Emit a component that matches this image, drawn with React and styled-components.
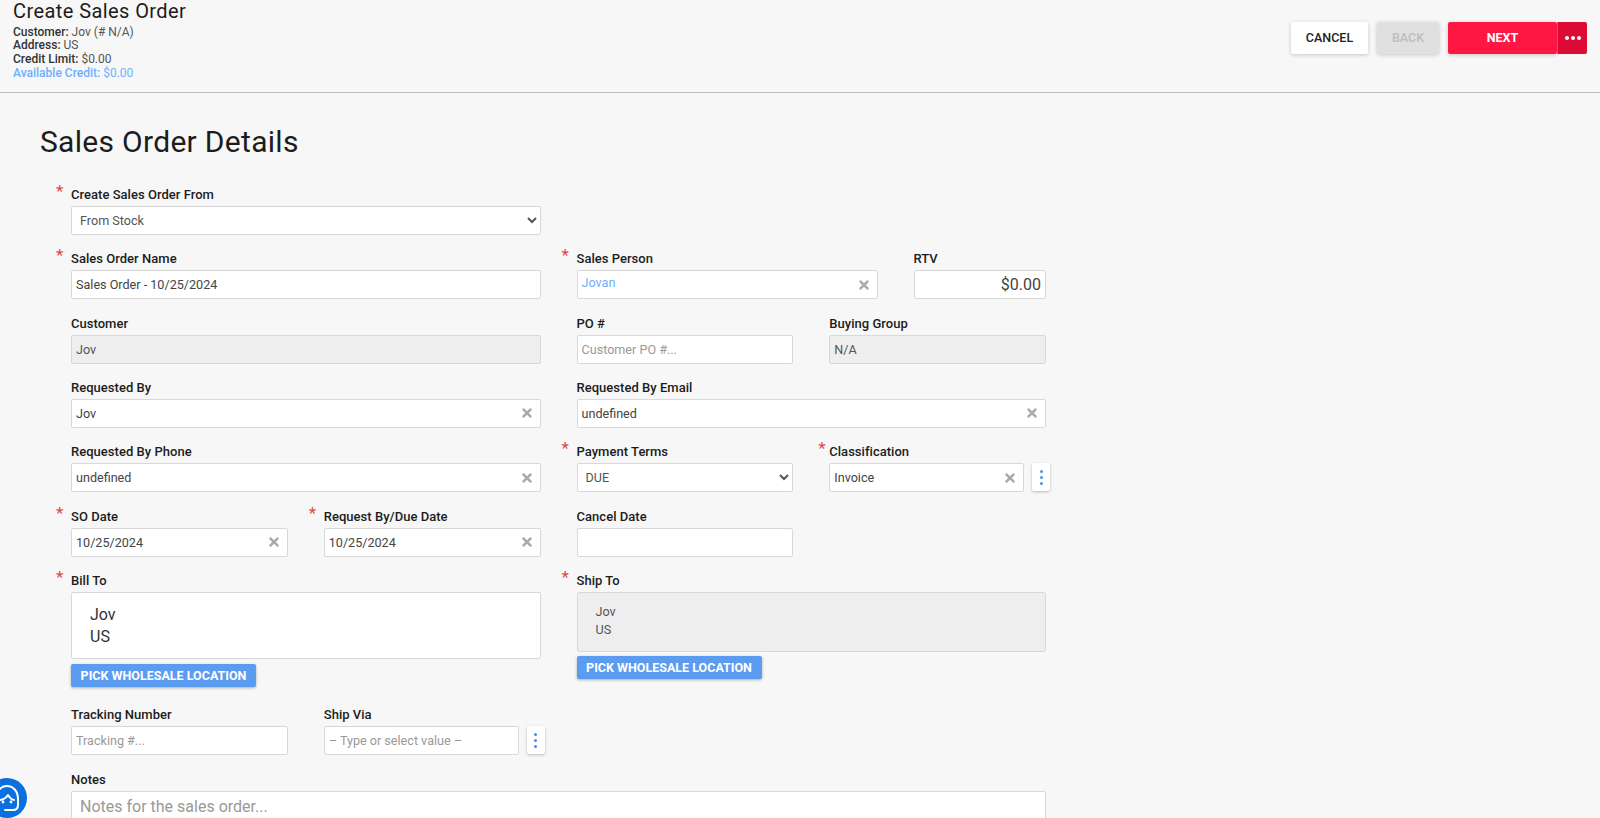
import React from "react";
import styled, { createGlobalStyle } from "styled-components";
import { FaTimes } from "react-icons/fa";

const Global = createGlobalStyle`
  html, body { margin: 0; padding: 0; height: 100%; overflow: hidden; background: #f7f7f7; }
  body { font-family: Roboto, "Liberation Sans", sans-serif; color: #212121; }
  * { box-sizing: border-box; }
`;

const Page = styled.div`
  position: relative;
  height: 100vh;
  overflow: hidden;
`;

const Header = styled.header`
  height: 93px;
  border-bottom: 1px solid #bdbdbd;
  padding: 0 13px;
  display: flex;
  justify-content: space-between;
  align-items: flex-start;
`;

const Title = styled.h1`
  margin: 0;
  font-size: 20px;
  line-height: 22px;
  font-weight: 400;
  letter-spacing: 0.42px;
  color: #1c1c1c;
`;

const InfoList = styled.div`
  margin-top: 3.5px;
`;

const InfoLine = styled.div`
  font-size: 12px;
  line-height: 13.7px;
  color: ${(p) => (p.$accent ? "#6db0ff" : "#555")};
  b {
    font-weight: 500;
    color: ${(p) => (p.$accent ? "#6db0ff" : "#333")};
  }
`;

const Actions = styled.div`
  display: flex;
  gap: 9px;
  margin-top: 22px;
`;

const ActionButton = styled.button`
  height: 32px;
  width: ${(p) => p.$width}px;
  border: 0;
  border-radius: 2px;
  padding: 0 0 2px;
  font: ${(p) => p.$weight || 500} 12.5px Roboto, sans-serif;
  text-transform: uppercase;
  background: ${(p) => p.$bg};
  color: ${(p) => p.$fg};
  box-shadow: 0 1px 4px rgba(0, 0, 0, 0.2);
`;

const SplitGroup = styled.div`
  display: flex;
`;

const MoreButton = styled.button`
  width: 30px;
  height: 32px;
  border: 0;
  border-left: 1px solid #f0476a;
  border-radius: 0 2px 2px 0;
  padding: 0;
  background: #dc0a35;
  color: #fff;
  display: flex;
  align-items: center;
  justify-content: center;
  gap: 2px;
`;

const WhiteDot = styled.span`
  width: 4px;
  height: 4px;
  border-radius: 50%;
  background: #fff;
`;

const Main = styled.main`
  padding: 31px 0 0 40px;
`;

const Heading = styled.h2`
  margin: 0;
  font-size: 30px;
  line-height: 36px;
  font-weight: 400;
  letter-spacing: 0.3px;
  color: #1c1c1c;
`;

const Form = styled.div`
  margin: 27px 0 0 31px;
  width: 975px;
  display: flex;
  flex-direction: column;
  gap: 16.33px;
`;

const Row = styled.div`
  display: grid;
  grid-template-columns: repeat(12, 48.25px);
  column-gap: 36px;
  align-items: start;
  margin-bottom: ${(p) => p.$after || 0}px;
`;

const Field = styled.div`
  position: relative;
  grid-column: span ${(p) => p.$span};
  min-width: 0;
`;

const Label = styled.div`
  font-size: 13px;
  line-height: 16px;
  font-weight: 500;
  letter-spacing: 0.03px;
  margin-bottom: 3px;
  color: #1c1c1c;
`;

const Star = styled.span`
  position: absolute;
  left: ${(p) => (p.$near ? -11 : -15)}px;
  top: -4px;
  font-size: 17px;
  line-height: 17px;
  color: #dc4a44;
`;

const Box = styled.div`
  height: 29px;
  display: flex;
  align-items: center;
  flex: 1;
  min-width: 0;
  padding: 0 4px;
  border: 1px solid #d8d8d8;
  border-radius: 2px;
  background: ${(p) => (p.$disabled ? "#eeeeee" : "#fff")};
  font-size: 12.6px;
  color: ${(p) => (p.$muted ? "#999" : p.$disabled ? "#555" : "#444")};
`;

const BoxText = styled.span`
  flex: 1;
  min-width: 0;
  white-space: nowrap;
`;

const LinkText = styled(BoxText)`
  color: #6db0ff;
  position: relative;
  top: -2px;
`;

const Money = styled(BoxText)`
  text-align: right;
  font-size: 16px;
  color: #444;
`;

const Clear = styled(FaTimes)`
  flex: none;
  width: 14px;
  height: 14px;
  margin-right: 2px;
  color: #aaa;
`;

const Select = styled.select`
  display: block;
  width: 100%;
  height: 29px;
  padding: 0 4px;
  border: 1px solid #d8d8d8;
  border-radius: 2px;
  background: #fff;
  font: 400 12.6px Roboto, sans-serif;
  color: #555;
`;

const WithAction = styled.div`
  display: flex;
  gap: 8px;
  margin-right: -4px;
`;

const Kebab = styled.button`
  flex: none;
  width: 18px;
  height: 28px;
  border: 0;
  border-radius: 2px;
  padding: 0;
  background: #fff;
  box-shadow: 0 1px 3px rgba(0, 0, 0, 0.25);
  display: flex;
  flex-direction: column;
  align-items: center;
  justify-content: center;
  gap: 3px;
`;

const BlueDot = styled.span`
  width: 3px;
  height: 3px;
  border-radius: 50%;
  background: #4a8fe7;
`;

const AddressBox = styled.div`
  border: 1px solid #d8d8d8;
  border-radius: 2px;
  height: ${(p) => p.$height}px;
  padding: ${(p) => p.$padTop}px 18px 0;
  background: ${(p) => (p.$disabled ? "#eeeeee" : "#fff")};
  color: ${(p) => (p.$disabled ? "#555" : "#333")};
  font-size: ${(p) => (p.$disabled ? 12.6 : 16)}px;
  line-height: ${(p) => (p.$disabled ? 18 : 22)}px;
`;

const PickButton = styled.button`
  display: block;
  margin-top: ${(p) => p.$top}px;
  height: 23px;
  width: 185px;
  border: 0;
  border-radius: 2px;
  padding: 0;
  background: #5b9bf0;
  color: #fff;
  font: 700 12.5px Roboto, sans-serif;
  text-transform: uppercase;
  box-shadow: 0 1px 3px rgba(0, 0, 0, 0.3);
`;

const NotesBox = styled.div`
  height: 80px;
  padding: 5px 8px;
  border: 1px solid #d8d8d8;
  border-radius: 2px;
  background: #fff;
  font-size: 16px;
  line-height: 20px;
  color: #999;
`;

const HelpBubble = styled.div`
  position: absolute;
  left: -13px;
  top: 778px;
  width: 40px;
  height: 40px;
  border-radius: 50%;
  background: #0b6fe0;
`;

const Dots3 = ({ as: C }) => (
  <>
    <C />
    <C />
    <C />
  </>
);

const F = ({ span, label, req, near, children }) => (
  <Field $span={span}>
    {req && <Star $near={near}>*</Star>}
    <Label>{label}</Label>
    {children}
  </Field>
);

const ClearBox = ({ children }) => (
  <Box>
    <BoxText>{children}</BoxText>
    <Clear />
  </Box>
);

export default function App() {
  return (
    <Page>
      <Global />
      <Header>
        <div>
          <Title>Create Sales Order</Title>
          <InfoList>
            <InfoLine><b>Customer:</b> Jov (# N/A)</InfoLine>
            <InfoLine><b>Address:</b> US</InfoLine>
            <InfoLine><b>Credit Limit:</b> $0.00</InfoLine>
            <InfoLine $accent><b>Available Credit:</b> $0.00</InfoLine>
          </InfoList>
        </div>
        <Actions>
          <ActionButton $width={77} $bg="#fff" $fg="#212121">Cancel</ActionButton>
          <ActionButton $width={62} $bg="#e0e0e0" $fg="#bdbdbd">Back</ActionButton>
          <SplitGroup>
            <ActionButton $width={109} $bg="#ff1744" $fg="#fff" $weight={700}>Next</ActionButton>
            <MoreButton aria-label="More"><Dots3 as={WhiteDot} /></MoreButton>
          </SplitGroup>
        </Actions>
      </Header>
      <Main>
        <Heading>Sales Order Details</Heading>
        <Form>
          <Row>
            <F span={6} label="Create Sales Order From" req>
              <Select defaultValue="stock"><option value="stock">From Stock</option></Select>
            </F>
          </Row>
          <Row>
            <F span={6} label="Sales Order Name" req><Box><BoxText>Sales Order - 10/25/2024</BoxText></Box></F>
            <F span={4} label="Sales Person" req>
              <Box><LinkText>Jovan</LinkText><Clear /></Box>
            </F>
            <F span={2} label="RTV"><Box><Money>$0.00</Money></Box></F>
          </Row>
          <Row>
            <F span={6} label="Customer"><Box $disabled><BoxText>Jov</BoxText></Box></F>
            <F span={3} label="PO #"><Box $muted><BoxText>Customer PO #...</BoxText></Box></F>
            <F span={3} label="Buying Group"><Box $disabled><BoxText>N/A</BoxText></Box></F>
          </Row>
          <Row>
            <F span={6} label="Requested By"><ClearBox>Jov</ClearBox></F>
            <F span={6} label="Requested By Email"><ClearBox>undefined</ClearBox></F>
          </Row>
          <Row>
            <F span={6} label="Requested By Phone"><ClearBox>undefined</ClearBox></F>
            <F span={3} label="Payment Terms" req>
              <Select defaultValue="due"><option value="due">DUE</option></Select>
            </F>
            <F span={3} label="Classification" req near>
              <WithAction>
                <ClearBox>Invoice</ClearBox>
                <Kebab aria-label="Options"><Dots3 as={BlueDot} /></Kebab>
              </WithAction>
            </F>
          </Row>
          <Row>
            <F span={3} label="SO Date" req><ClearBox>10/25/2024</ClearBox></F>
            <F span={3} label="Request By/Due Date" req><ClearBox>10/25/2024</ClearBox></F>
            <F span={3} label="Cancel Date"><Box /></F>
          </Row>
          <Row $after={4}>
            <F span={6} label="Bill To" req>
              <AddressBox $height={67} $padTop={11}>Jov<br />US</AddressBox>
              <PickButton $top={5}>Pick Wholesale Location</PickButton>
            </F>
            <F span={6} label="Ship To" req>
              <AddressBox $disabled $height={60} $padTop={10}>Jov<br />US</AddressBox>
              <PickButton $top={4}>Pick Wholesale Location</PickButton>
            </F>
          </Row>
          <Row>
            <F span={3} label="Tracking Number"><Box $muted><BoxText>Tracking #...</BoxText></Box></F>
            <F span={3} label="Ship Via">
              <WithAction>
                <Box $muted><BoxText>– Type or select value –</BoxText></Box>
                <Kebab aria-label="Options"><Dots3 as={BlueDot} /></Kebab>
              </WithAction>
            </F>
          </Row>
          <Row>
            <F span={12} label="Notes"><NotesBox>Notes for the sales order...</NotesBox></F>
          </Row>
        </Form>
      </Main>
      <HelpBubble>
        <svg width="40" height="40" viewBox="0 0 40 40" fill="none" stroke="#fff" strokeWidth="2" strokeLinecap="round" strokeLinejoin="round">
          <path d="M9 21c0-8 5-13 11-13s11 5 11 13v6c0 3-2 5-5 5h-8" />
          <path d="M12 22c4 0 7-2 9-5 2 3 4 5 6 5" />
          <circle cx="16" cy="24" r="1.4" fill="#fff" stroke="none" />
          <circle cx="24" cy="24" r="1.4" fill="#fff" stroke="none" />
        </svg>
      </HelpBubble>
    </Page>
  );
}
